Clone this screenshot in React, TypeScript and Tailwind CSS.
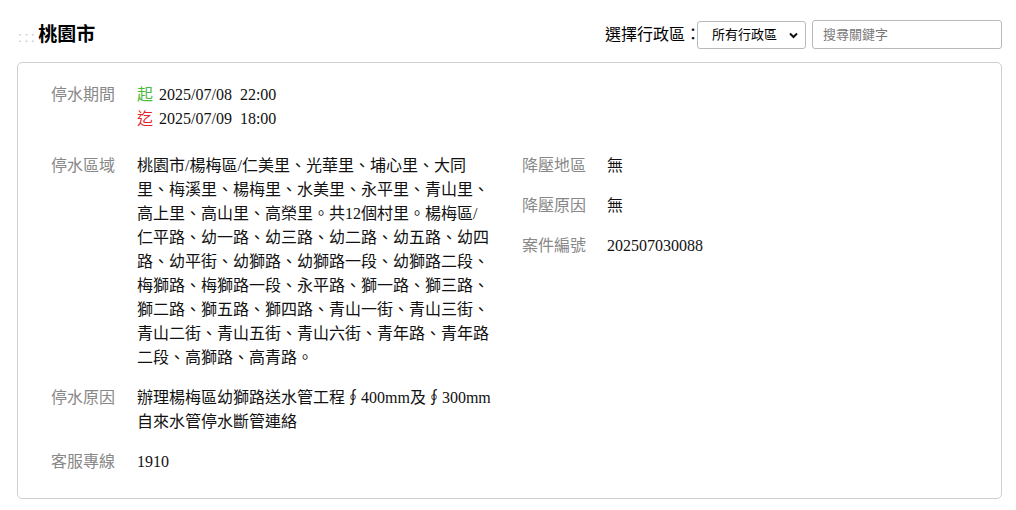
import { useState } from 'react';

const serif = '[font-family:"Liberation_Serif","Noto_Sans_CJK_TC",serif]';

const areaText =
  '桃園市/楊梅區/仁美里、光華里、埔心里、大同里、梅溪里、楊梅里、水美里、永平里、青山里、高上里、高山里、高榮里。共12個村里。楊梅區/仁平路、幼一路、幼三路、幼二路、幼五路、幼四路、幼平街、幼獅路、幼獅路一段、幼獅路二段、梅獅路、梅獅路一段、永平路、獅一路、獅三路、獅二路、獅五路、獅四路、青山一街、青山三街、青山二街、青山五街、青山六街、青年路、青年路二段、高獅路、高青路。';

const sideRows = [
  { label: '降壓地區', value: '無' },
  { label: '降壓原因', value: '無' },
  { label: '案件編號', value: '202507030088' },
];

function Row({ label, children, className = '' }: { label: string; children: React.ReactNode; className?: string }) {
  return (
    <div className={`flex ${className}`}>
      <div className="w-[86px] shrink-0 text-[#888]">{label}</div>
      <div className="flex-1 text-[#111]">{children}</div>
    </div>
  );
}

export default function App() {
  const [district, setDistrict] = useState('all');

  return (
    <div className="bg-white px-[17px] pr-[14px] pt-[20px] pb-[11px] [font-family:'Liberation_Sans','Noto_Sans_CJK_TC',sans-serif]">
      {/* Header */}
      <div className="flex items-center justify-between h-[29px]">
        <h1 className="flex items-center text-[19px] font-bold text-black mt-[2px]">
          <span className="text-[#c4c4c4] text-[14px] font-normal tracking-[2.5px] mr-[1px] mt-[3px] ml-[1px]">:::</span>
          桃園市
        </h1>
        <div className="flex items-center text-[16px] text-black">
          <span>選擇行政區：</span>
          <div className="relative ml-[-4px]">
            <select
              value={district}
              onChange={(e) => setDistrict(e.target.value)}
              className="appearance-none h-[28px] w-[109px] rounded-[3px] border border-[#b9b9b9] bg-white pl-[14px] text-[13px] text-black outline-none"
            >
              <option value="all">所有行政區</option>
              <option value="yangmei">楊梅區</option>
            </select>
            <svg
              className="pointer-events-none absolute right-[8px] top-[11px]"
              width="9"
              height="7"
              viewBox="0 0 9 7"
            >
              <path d="M1 1.5 L4.5 5 L8 1.5" fill="none" stroke="#111" strokeWidth="2" />
            </svg>
          </div>
          <input
            placeholder="搜尋關鍵字"
            className="ml-[6px] h-[29px] w-[190px] rounded-[3px] border border-[#b9b9b9] px-[10px] text-[13px] outline-none placeholder:text-[#777]"
          />
        </div>
      </div>

      {/* Card */}
      <div className={`mt-[13px] rounded-[5px] border border-[#cfcfcf] pl-[33px] pt-[20px] pb-[24px] text-[16px] leading-[24px] ${serif}`}>
        <Row label="停水期間" className="mb-[23px]">
          <div>
            <span className="text-[#4cbb3c] mr-[6px]">起</span>
            <span className="whitespace-pre">2025/07/08  22:00</span>
          </div>
          <div>
            <span className="text-[#e3242b] mr-[6px]">迄</span>
            <span className="whitespace-pre">2025/07/09  18:00</span>
          </div>
        </Row>

        <div className="flex">
          <div className="w-[440px] shrink-0 flex flex-col gap-[16px]">
            <Row label="停水區域">{areaText}</Row>
            <Row label="停水原因">辦理楊梅區幼獅路送水管工程∮400mm及∮300mm自來水管停水斷管連絡</Row>
            <Row label="客服專線">1910</Row>
          </div>
          <div className="ml-[31px] flex flex-col gap-[16px]">
            {sideRows.map((r) => (
              <div key={r.label} className="flex">
                <div className="w-[85px] shrink-0 text-[#888]">{r.label}</div>
                <div className="text-[#111]">{r.value}</div>
              </div>
            ))}
          </div>
        </div>
      </div>
    </div>
  );
}
